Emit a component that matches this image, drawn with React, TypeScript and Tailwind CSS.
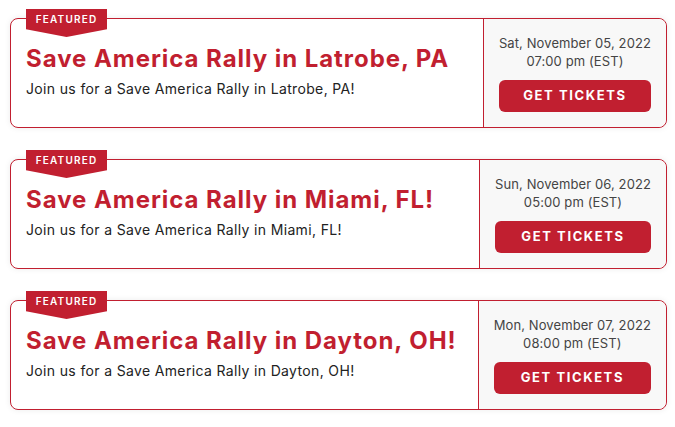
const events = [
  {
    title: 'Save America Rally in Latrobe, PA',
    blurb: 'Join us for a Save America Rally in Latrobe, PA!',
    date: 'Sat, November 05, 2022',
    time: '07:00 pm (EST)',
  },
  {
    title: 'Save America Rally in Miami, FL!',
    blurb: 'Join us for a Save America Rally in Miami, FL!',
    date: 'Sun, November 06, 2022',
    time: '05:00 pm (EST)',
  },
  {
    title: 'Save America Rally in Dayton, OH!',
    blurb: 'Join us for a Save America Rally in Dayton, OH!',
    date: 'Mon, November 07, 2022',
    time: '08:00 pm (EST)',
  },
]

function EventCard({ title, blurb, date, time }: (typeof events)[number])
{
  return (
    <div className="relative flex h-[110px] rounded-lg border border-[#c11f30] bg-white shadow-[0_0_6px_rgba(0,0,0,0.08)]">

      <div className="absolute -top-[10px] left-[15px] flex h-[28px] w-[81px] justify-center bg-[#c11f30] pt-[4px] [clip-path:polygon(0_0,100%_0,100%_72%,50%_100%,0_72%)]">
        <span className="text-[10px] font-semibold leading-[12px] tracking-[1.2px] text-white">
          FEATURED
        </span>
      </div>

      <div className="flex-1 pl-[15px] pt-[25px]">
        <h2 className="text-[24px] font-bold leading-[30px] tracking-[0.95px] text-[#c11f30]">
          {title}
        </h2>
        <p className="mt-[6px] text-[14px] leading-[18px] tracking-[0.35px] text-[#222]">
          {blurb}
        </p>
      </div>

      <div className="flex flex-col items-stretch rounded-r-lg border-l border-[#c11f30] bg-[#f8f8f8] px-[15px] py-[15px]">
        <p className="text-center text-[13px] leading-[18px] tracking-[0.1px] text-[#444]">
          {date}
          <br />
          {time}
        </p>
        <button className="mt-[10px] h-[32px] rounded-md bg-[#c11f30] text-[13px] font-bold tracking-[1.6px] text-white">
          GET TICKETS
        </button>
      </div>

    </div>
  )
}

export default function App()
{
  return (
    <main className="flex min-h-screen flex-col gap-[31px] bg-white pl-[10px] pr-[8px] pt-[18px] font-['Inter',sans-serif]">
      {events.map((e) => (
        <EventCard key={e.title} {...e} />
      ))}
    </main>
  )
}
